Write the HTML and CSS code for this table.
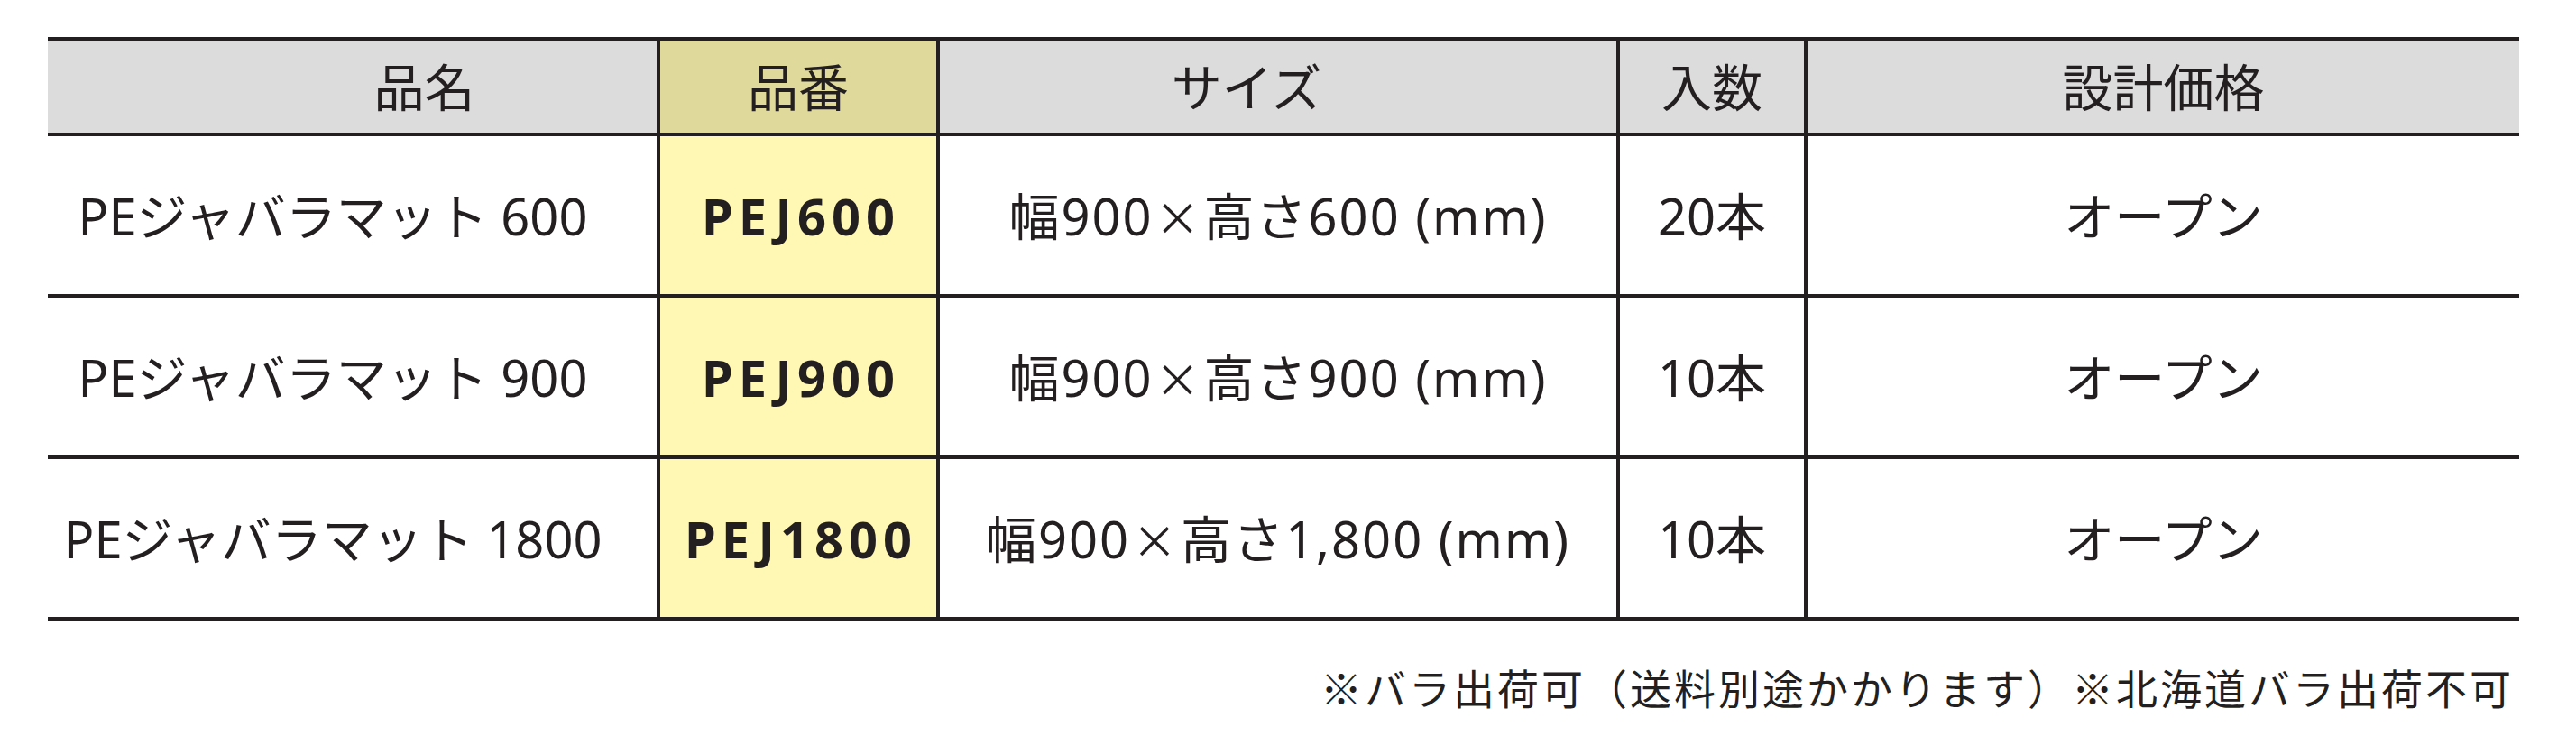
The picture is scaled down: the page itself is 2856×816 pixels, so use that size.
FILE: index.html
```html
<!DOCTYPE html>
<html lang="ja">
<head>
<meta charset="utf-8">
<title>PEジャバラマット</title>
<link rel="stylesheet" href="styles.css">
</head>
<body>
<div class="sheet">
  <div class="spec-table">
    <div class="row head-row">
      <div class="cell head name-head">品名</div>
      <div class="cell head code-head">品番</div>
      <div class="cell head size-head">サイズ</div>
      <div class="cell head">入数</div>
      <div class="cell head">設計価格</div>
    </div>
    <div class="row body-row">
      <div class="cell name">PEジャバラマット 600</div>
      <div class="cell code">PEJ600</div>
      <div class="cell size">幅900<span class="times">×</span>高さ600 (mm)</div>
      <div class="cell">20本</div>
      <div class="cell">オープン</div>
    </div>
    <div class="row body-row">
      <div class="cell name">PEジャバラマット 900</div>
      <div class="cell code">PEJ900</div>
      <div class="cell size">幅900<span class="times">×</span>高さ900 (mm)</div>
      <div class="cell">10本</div>
      <div class="cell">オープン</div>
    </div>
    <div class="row body-row">
      <div class="cell name">PEジャバラマット 1800</div>
      <div class="cell code">PEJ1800</div>
      <div class="cell size">幅900<span class="times">×</span>高さ1,800 (mm)</div>
      <div class="cell">10本</div>
      <div class="cell">オープン</div>
    </div>
  </div>
  <p class="note">※バラ出荷可（送料別途かかります）※北海道バラ出荷不可</p>
</div>
</body>
</html>
```

FILE: styles.css
```css
* {
  box-sizing: border-box;
}

html, body {
  margin: 0;
  padding: 0;
  background: #ffffff;
}

body {
  font-family: "Noto Sans", "Noto Sans CJK JP", sans-serif;
  color: #231f20;
}

.sheet {
  padding: 41px 0 0 53px;
  width: 2793px;
}

.spec-table {
  width: 2740px;
  border-top: 4px solid #231f20;
}

.row {
  display: grid;
  grid-template-columns: 675px 310px 754px 208px 793px;
  border-bottom: 4px solid #231f20;
}

.head-row {
  height: 106px;
  background: #dcdcdc;
}

.body-row {
  height: 179px;
}

.cell {
  display: flex;
  align-items: center;
  justify-content: center;
  font-size: 56px;
  line-height: 1;
  white-space: nowrap;
  border-left: 4px solid #231f20;
}

.cell:first-child {
  border-left: none;
}

.head {
  font-size: 56px;
}

.name-head {
  padding-left: 160px;
}

.size-head {
  padding-right: 70px;
}

.code-head {
  background: #e0d99c;
}

.name {
  padding-right: 43px;
}

.code {
  background: #fff8b4;
  font-weight: 700;
  letter-spacing: 6px;
  padding-left: 6px;
}

.size {
  letter-spacing: 2px;
}

.times {
  font-family: "Noto Sans CJK JP", sans-serif;
  font-size: 50px;
  margin: 0 2px;
}

.note {
  margin: 46px 0 0 0;
  width: 2740px;
  padding-right: 6px;
  text-align: right;
  font-size: 46px;
  line-height: 55px;
  letter-spacing: 3px;
  font-family: "Noto Sans CJK JP", sans-serif;
}
```
